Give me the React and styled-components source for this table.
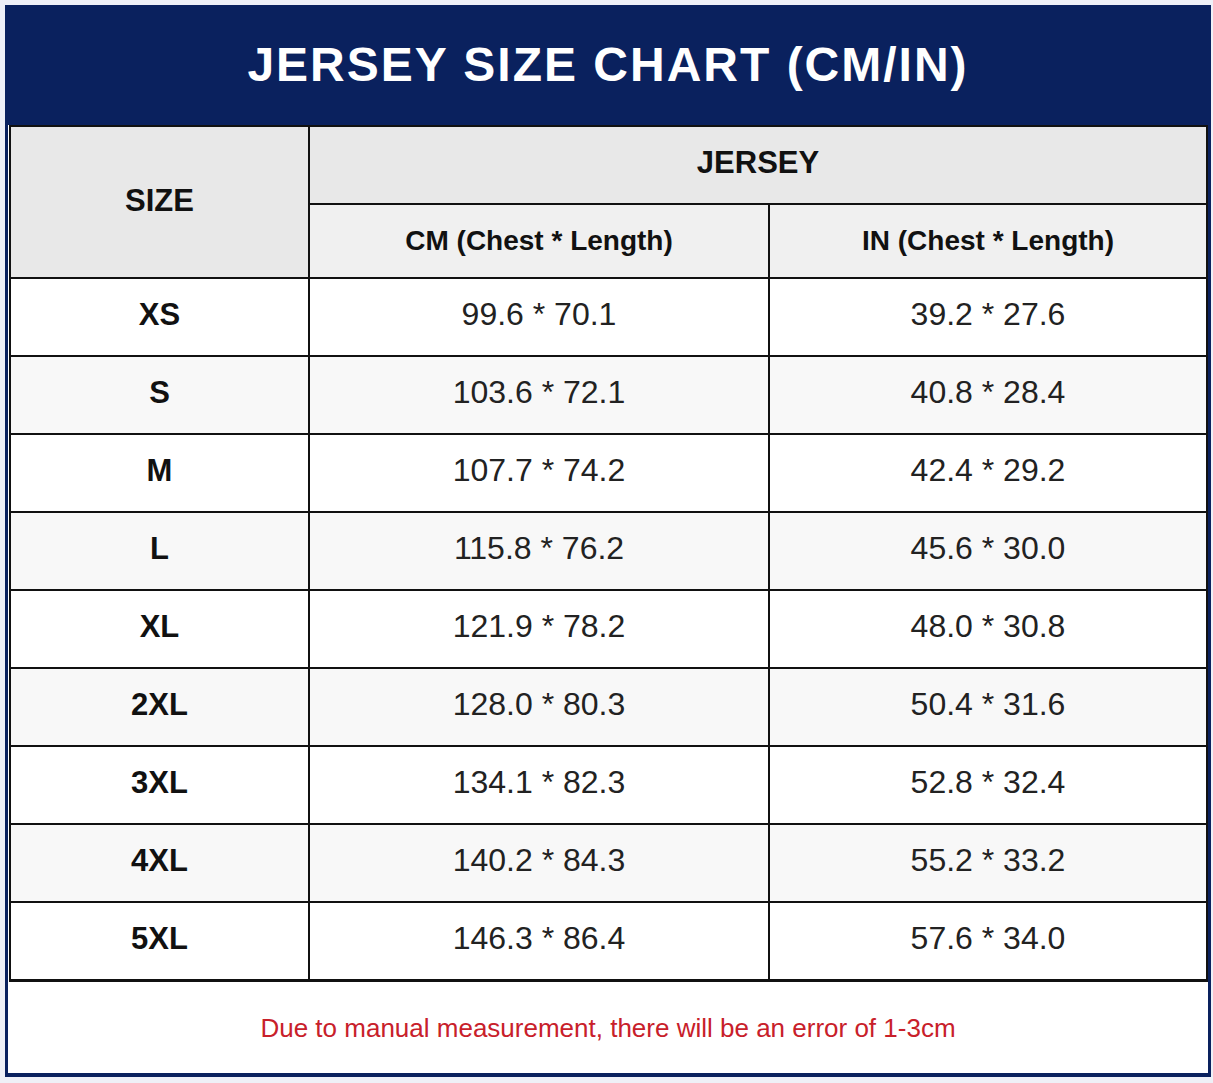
import React from 'react';
import styled, { createGlobalStyle } from 'styled-components';

const GlobalStyle = createGlobalStyle`
    html, body {
        margin: 0;
        padding: 0;
        background: #eff0f7;
    }
    body {
        font-family: 'Liberation Sans', Arial, sans-serif;
    }
`;

const Page = styled.div`
    padding: 5px 2px 6px 5px;
`;

const Card = styled.div`
    width: 1200px;
    border: 3px solid #0a215e;
    border-top: 0;
    border-bottom-width: 4px;
    background: #ffffff;
`;

const Header = styled.div`
    height: 120px;
    background: #0a215e;
    display: flex;
    align-items: center;
    justify-content: center;
`;

const Title = styled.h1`
    margin: 0;
    color: #ffffff;
    font-size: 48px;
    font-weight: 700;
    letter-spacing: 2px;
    line-height: 1;
`;

const Table = styled.div`
    display: grid;
    grid-template-columns: 297px 458px 1fr;
    grid-auto-rows: 76px;
    grid-template-rows: 76px 72px;
    gap: 2px;
    padding: 2px 2px 3px 2px;
    margin-left: 1px;
    width: 1195px;
    background: #111111;
`;

const Cell = styled.div`
    display: flex;
    align-items: center;
    justify-content: center;
    padding-bottom: ${(p) => p.$lift ?? 5}px;
    background: ${(p) => p.$bg || '#ffffff'};
    color: ${(p) => (p.$bold ? '#111111' : '#222222')};
    font-size: ${(p) => p.$size || 32}px;
    font-weight: ${(p) => (p.$bold ? 700 : 400)};
    grid-row: ${(p) => (p.$rowSpan ? `span ${p.$rowSpan}` : 'auto')};
    grid-column: ${(p) => (p.$colSpan ? `span ${p.$colSpan}` : 'auto')};
`;

const Footer = styled.div`
    height: 91px;
    display: flex;
    align-items: center;
    justify-content: center;
    padding-top: 1px;
    box-sizing: border-box;
    color: #c8202a;
    font-size: 26px;
    background: #ffffff;
`;

const sizes = [
    ['XS', '99.6 * 70.1', '39.2 * 27.6'],
    ['S', '103.6 * 72.1', '40.8 * 28.4'],
    ['M', '107.7 * 74.2', '42.4 * 29.2'],
    ['L', '115.8 * 76.2', '45.6 * 30.0'],
    ['XL', '121.9 * 78.2', '48.0 * 30.8'],
    ['2XL', '128.0 * 80.3', '50.4 * 31.6'],
    ['3XL', '134.1 * 82.3', '52.8 * 32.4'],
    ['4XL', '140.2 * 84.3', '55.2 * 33.2'],
    ['5XL', '146.3 * 86.4', '57.6 * 34.0'],
];

const App = () => {
    return (
        <Page>
            <GlobalStyle />
            <Card>
                <Header>
                    <Title>JERSEY SIZE CHART (CM/IN)</Title>
                </Header>
                <Table>
                    <Cell $bold $size={31} $bg="#e8e8e8" $rowSpan={2} $lift={3}>
                        SIZE
                    </Cell>
                    <Cell $bold $size={31} $bg="#e8e8e8" $colSpan={2} $lift={4}>
                        JERSEY
                    </Cell>
                    <Cell $bold $size={28} $bg="#f0f0f0" $lift={0}>
                        CM (Chest * Length)
                    </Cell>
                    <Cell $bold $size={28} $bg="#f0f0f0" $lift={0}>
                        IN (Chest * Length)
                    </Cell>
                    {sizes.map(([size, cm, inch], i) => {
                        const bg = i % 2 ? '#f8f8f8' : '#ffffff';
                        return (
                            <React.Fragment key={size}>
                                <Cell $bold $size={31} $bg={bg}>
                                    {size}
                                </Cell>
                                <Cell $bg={bg}>{cm}</Cell>
                                <Cell $bg={bg}>{inch}</Cell>
                            </React.Fragment>
                        );
                    })}
                </Table>
                <Footer>
                    Due to manual measurement, there will be an error of 1-3cm
                </Footer>
            </Card>
        </Page>
    );
};

export default App;
